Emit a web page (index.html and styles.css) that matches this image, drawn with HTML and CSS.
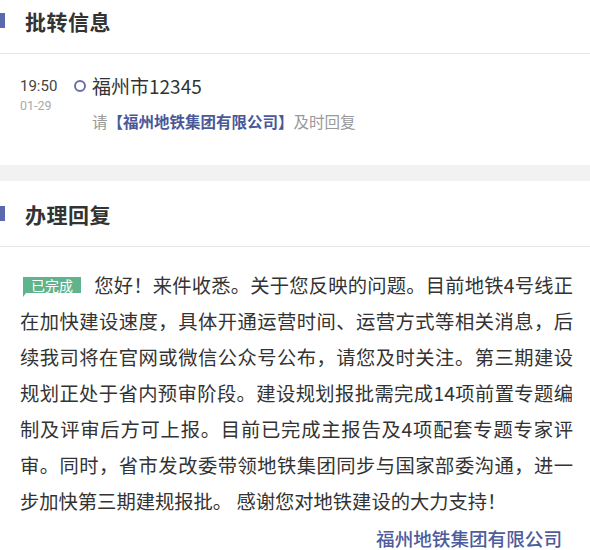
FILE: index.html
```html
<!DOCTYPE html>
<html lang="zh-CN">
<head>
    <meta charset="UTF-8">
    <meta name="viewport" content="width=device-width, initial-scale=1.0">
    <title>办理详情</title>
    <link rel="stylesheet" href="styles.css">
</head>
<body>
    <div class="page">
        <div class="section-head">
            <h2 class="section-title">批转信息</h2>
        </div>
        <div class="transfer">
            <div class="tl-time">
                <div class="tl-clock">19:50</div>
                <div class="tl-date">01-29</div>
            </div>
            <div class="tl-dot"></div>
            <div class="tl-body">
                <div class="tl-from">福州市12345</div>
                <div class="tl-note">请<span class="org">【福州地铁集团有限公司】</span>及时回复</div>
            </div>
        </div>

        <div class="gap"></div>

        <div class="section-head">
            <h2 class="section-title">办理回复</h2>
        </div>
        <div class="reply">
            <p class="reply-text">
                <span class="ln"><span class="badge">已完成</span>您好！来件收悉。关于您反映的问题。目前地铁4号线正</span>
                <span class="ln">在加快建设速度，具体开通运营时间、运营方式等相关消息，后</span>
                <span class="ln">续我司将在官网或微信公众号公布，请您及时关注。第三期建设</span>
                <span class="ln">规划正处于省内预审阶段。建设规划报批需完成14项前置专题编</span>
                <span class="ln">制及评审后方可上报。目前已完成主报告及4项配套专题专家评</span>
                <span class="ln">审。同时，省市发改委带领地铁集团同步与国家部委沟通，进一</span>
                <span class="ln last">步加快第三期建规报批。 感谢您对地铁建设的大力支持！</span>
            </p>
            <div class="reply-sign">福州地铁集团有限公司</div>
        </div>
    </div>
</body>
</html>
```

FILE: styles.css
```css
body {
    margin: 0;
    background: #fff;
    color: #333;
    font-family: "Noto Sans CJK SC", "Noto Sans", sans-serif;
    overflow: hidden;
}
.page {
    margin-top: -12px;
}
.section-head {
    height: 66px;
    box-sizing: border-box;
    border-bottom: 1px solid #e6e6e6;
    display: flex;
    align-items: center;
}
.section-head::before {
    content: "";
    width: 5px;
    height: 15px;
    background: #5a68ad;
    margin-right: 20px;
}
.section-title {
    margin: 0;
    font-size: 21px;
    font-weight: 700;
    color: #333;
    letter-spacing: 0.5px;
}
.transfer {
    display: flex;
    align-items: flex-start;
    padding: 20px 20px 34px;
}
.tl-time {
    width: 54px;
    flex: none;
}
.tl-clock {
    font-family: Roboto, "Noto Sans", sans-serif;
    font-size: 15px;
    line-height: 24px;
    color: #444;
}
.tl-date {
    font-family: Roboto, "Noto Sans", sans-serif;
    font-size: 12.5px;
    line-height: 16px;
    color: #aaa;
}
.tl-dot {
    flex: none;
    width: 12px;
    height: 12px;
    box-sizing: border-box;
    border: 2px solid #6a6fa8;
    border-radius: 50%;
    margin-top: 6px;
}
.tl-body {
    margin-left: 6px;
}
.tl-from {
    font-size: 19px;
    line-height: 24px;
    color: #333;
}
.tl-note {
    margin-top: 13px;
    font-size: 15.5px;
    line-height: 20px;
    color: #999;
}
.org {
    color: #4a5899;
    font-weight: 700;
}
.gap {
    height: 16px;
    background: #f2f2f2;
}
.reply {
    padding: 20px 17px 0 20px;
}
.reply-text {
    margin: 0;
    font-size: 19.3px;
    line-height: 36px;
    color: #333;
}
.ln {
    display: block;
    white-space: nowrap;
    text-align: justify;
    text-align-last: justify;
}
.ln.last {
    text-align-last: left;
}
.badge {
    position: relative;
    display: inline-block;
    vertical-align: 2px;
    margin: 0 13px 0 3px;
    padding: 0 8px;
    background: #5fb48b;
    color: #fff;
    font-size: 14px;
    line-height: 16px;
}
.badge::after {
    content: "";
    position: absolute;
    left: 0;
    bottom: -4px;
    border-left: 3px solid #5fb48b;
    border-bottom: 4px solid transparent;
}
.reply-sign {
    margin-top: 5px;
    padding-right: 11px;
    text-align: right;
    font-size: 18.6px;
    line-height: 28px;
    color: #4d5c9c;
    font-weight: 500;
}
```
